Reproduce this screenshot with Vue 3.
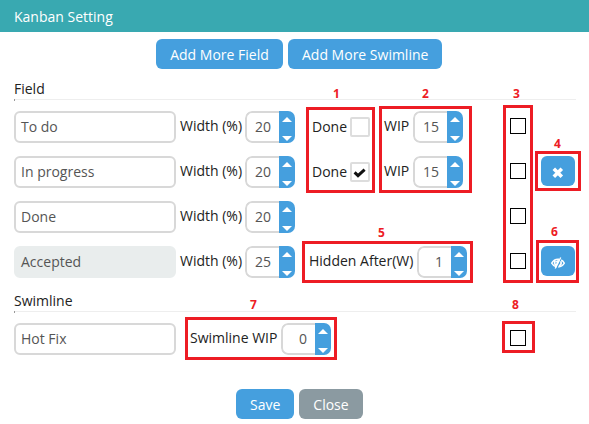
<script setup>
import { h } from 'vue'

const Spinner = (props) =>
  h('span', { class: 'spinner' }, [
    h('span', { class: 'value' }, props.value),
    h('span', { class: 'arrows' }, [h('i', { class: 'up' }), h('i', { class: 'down' })])
  ])
Spinner.props = ['value']

const fields = [
  { name: 'To do', width: 20, wip: 15, done: false },
  { name: 'In progress', width: 20, wip: 15, done: true, action: 'remove' },
  { name: 'Done', width: 20 },
  { name: 'Accepted', width: 25, hidden: 1, disabled: true, action: 'hide' }
]
</script>

<template>
  <div class="dialog">
    <header>Kanban Setting</header>
    <div class="toolbar">
      <button class="btn">Add More Field</button>
      <button class="btn">Add More Swimline</button>
    </div>

    <h2>Field</h2>
    <div class="rows">
      <div v-for="f in fields" :key="f.name" class="row">
        <span class="input" :class="{ disabled: f.disabled }">{{ f.name }}</span>
        <span class="label">Width (%)</span>
        <Spinner :value="f.width" />
        <div class="extra">
          <template v-if="f.wip">
            <span class="label done">Done</span>
            <span class="tick">
              <svg v-if="f.done" width="14" height="14" viewBox="0 0 14 14"><path d="M1.6 7.4 5 10.6 11.6 4.6" fill="none" stroke="#111" stroke-width="3" /></svg>
            </span>
            <span class="label wip">WIP</span>
            <Spinner :value="f.wip" />
          </template>
          <template v-if="f.hidden">
            <span class="label hidden">Hidden After(W)</span>
            <Spinner :value="f.hidden" />
          </template>
        </div>
        <span class="select"></span>
        <button v-if="f.action" class="btn action">
          <svg v-if="f.action === 'remove'" width="12" height="12" viewBox="0 0 12 12"><path d="M1.8 1.8 9.8 9.8M9.8 1.8 1.8 9.8" stroke="#fff" stroke-width="3.6" /></svg>
          <svg v-else width="14" height="12" viewBox="0 0 14 12" fill="none" stroke="#fff">
            <path d="M5.6 10C3.5 9.6 1.8 8.2.7 6.2 1.8 4.2 4 2.2 7 2.2L8 2.3M10.2 3C11.6 3.7 12.6 5 13.3 6.2 12.1 8.3 10 9.9 7.2 10" stroke-width="1.4" />
            <path d="M4.2 3.6C3.2 5.5 3.9 7.6 5.2 8.5L7.6 4C6.7 3.6 5.7 4.3 5.5 5.3M9.8 4.3C10.5 6.3 9.6 8.2 7.9 8.8" stroke-width="1.7" />
            <path d="M9.7.5 4.2 11.5" stroke-width="1.4" />
          </svg>
        </button>
      </div>
    </div>

    <h2 class="second">Swimline</h2>
    <div class="rows">
      <div class="row swim">
        <span class="input">Hot Fix</span>
        <span class="label">Swimline WIP</span>
        <Spinner value="0" />
        <span class="select"></span>
      </div>
    </div>

    <footer>
      <button class="btn">Save</button>
      <button class="btn grey">Close</button>
    </footer>

    <div class="mark m1"><b>1</b></div>
    <div class="mark m2"><b>2</b></div>
    <div class="mark m3"><b>3</b></div>
    <div class="mark m4"><b>4</b></div>
    <div class="mark m5"><b>5</b></div>
    <div class="mark m6"><b>6</b></div>
    <div class="mark m7"><b>7</b></div>
    <div class="mark m8"><b>8</b></div>
  </div>
</template>

<style>
body { margin: 0; background: #fff; }
</style>

<style scoped>
.dialog, .dialog :deep(*) { box-sizing: border-box; }
.dialog { position: relative; width: 589px; height: 424px; overflow: hidden; background: #fff; font: 14px/20px "Open Sans", sans-serif; color: #222; }
header { height: 32px; padding: 0 14px; line-height: 34px; background: #39a9b1; color: #fff; }
.toolbar, footer { display: flex; gap: 5px; }
.toolbar { padding: 7px 0 0 156px; }
.btn { height: 30px; padding: 1px 14px 0; border: 0; border-radius: 6px; background: #459fde; color: #fff; font: inherit; line-height: 29px; white-space: nowrap; }
.toolbar .btn:first-child { width: 127px; }
.toolbar .btn:last-child { width: 154px; }
h2 { width: 562px; height: 21px; margin: 10px 0 11px 14px; border-bottom: 1px solid #eee; font-size: 14px; font-weight: 400; line-height: 20px; position: relative; }
h2::after { content: ""; position: absolute; left: 0; bottom: -2px; width: 1px; height: 2px; background: #999; }
h2.second { margin: 13px 0 11px 14px; }
.rows { display: grid; gap: 13px; padding-left: 14px; }
.row { display: grid; grid-template-columns: 166px 65px 59px 206px 31px 34px; height: 32px; }
.row.swim { grid-template-columns: 176px 91px 229px 16px; }
.input { width: 162px; height: 32px; padding: 0 5px; border: 2px solid #d8d8d8; border-radius: 6px; line-height: 27px; color: #555; }
.input.disabled { border-color: #e9eded; background: #e9eded; }
.label { line-height: 30px; white-space: nowrap; }
.extra { display: flex; padding-left: 8px; }
.done { width: 38px; line-height: 31px; }
.wip { width: 29px; margin-left: 14px; }
.hidden { width: 108px; margin-left: -3px; }
.tick { display: flex; align-items: center; justify-content: center; width: 20px; height: 20px; margin-top: 6px; border: 2px solid #ddd; border-radius: 2px; }
:deep(.spinner) { display: flex; width: 50px; height: 32px; border-radius: 7px; overflow: hidden; }
:deep(.value) { width: 34px; padding-right: 8px; border: 2px solid #d8d8d8; border-right: 0; border-radius: 7px 0 0 7px; line-height: 27px; text-align: right; color: #555; }
:deep(.arrows) { display: flex; flex-direction: column; justify-content: space-between; align-items: center; width: 16px; padding: 6px 0 2px; background: #459fde; }
:deep(.up), :deep(.down) { width: 0; height: 0; border: 5px solid transparent; }
:deep(.up) { border-top: 0; border-bottom-color: #fff; }
:deep(.down) { border-bottom: 0; border-top-color: #fff; }
.select { width: 16px; height: 16px; margin-top: 7px; border: 1px solid #000; background: #fff; }
.action { display: flex; align-items: center; justify-content: center; width: 34px; padding: 3px 0 0; }
footer { padding: 34px 0 0 236px; }
footer .btn { width: 58px; }
footer .grey { width: 64px; background: #8b9aa1; }
.mark { position: absolute; border: 3px solid #ed1c24; }
.mark b { position: absolute; font: 700 12px/12px "Open Sans", sans-serif; color: #ed1c24; }
.m1 { left: 306px; top: 107px; width: 69px; height: 86px; }
.m1 b { left: 24px; top: -22px; }
.m2 { left: 379px; top: 106px; width: 93px; height: 87px; }
.m2 b { left: 40px; top: -21px; }
.m3 { left: 503px; top: 105px; width: 30px; height: 178px; }
.m3 b { left: 7px; top: -20px; }
.m4 { left: 535px; top: 151px; width: 46px; height: 40px; }
.m4 b { left: 16px; top: -16px; }
.m5 { left: 302px; top: 241px; width: 171px; height: 42px; }
.m5 b { left: 73px; top: -17px; }
.m6 { left: 536px; top: 240px; width: 43px; height: 43px; }
.m6 b { left: 12px; top: -17px; }
.m7 { left: 185px; top: 317px; width: 152px; height: 43px; }
.m7 b { left: 62px; top: -21px; }
.m8 { left: 502px; top: 321px; width: 33px; height: 32px; }
.m8 b { left: 7px; top: -25px; }
</style>
